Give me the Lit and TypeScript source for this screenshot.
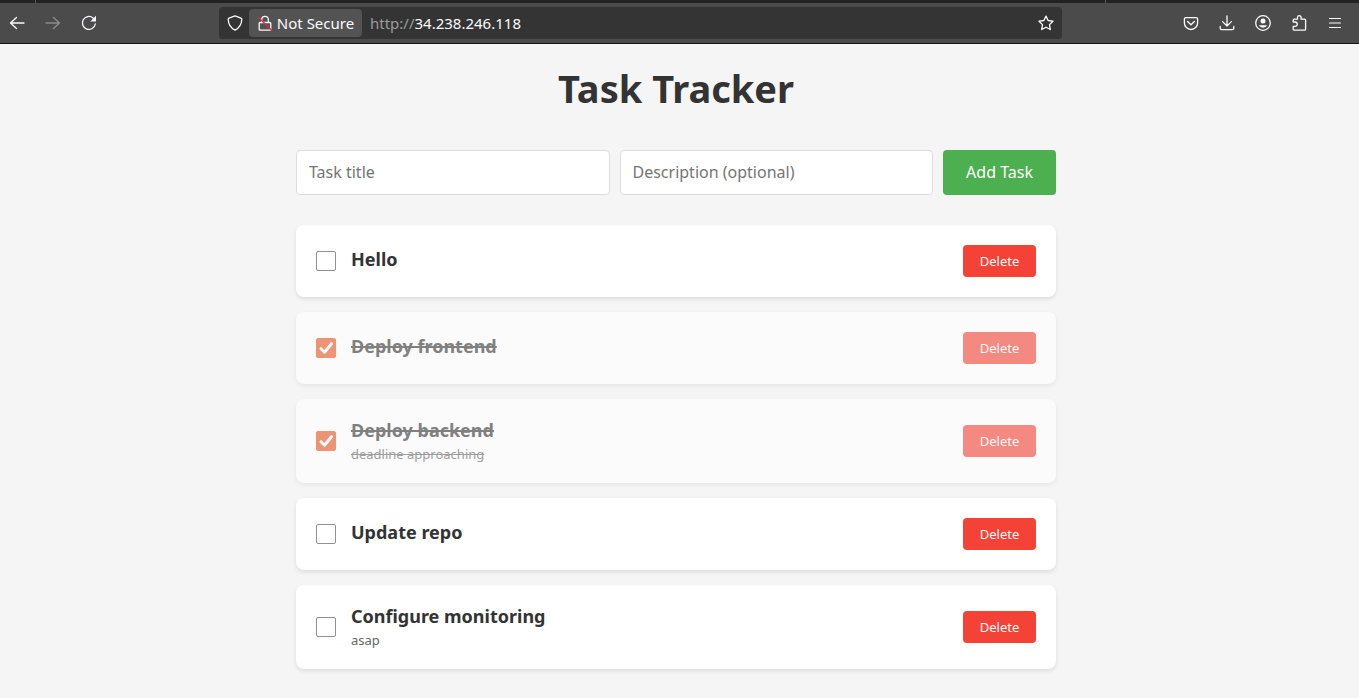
import { LitElement, html, css, svg, nothing } from "lit";
import { customElement, property, state } from "lit/decorators.js";
import { classMap } from "lit/directives/class-map.js";

interface Task {
  id: number;
  title: string;
  description: string;
  done: boolean;
}

const icons = {
  back: svg`<path d="M15 8H1.500M7.500 2.500L1.500 8l6 5.500" />`,
  forward: svg`<path d="M1 8h13.500M8.500 2.500l6 5.500-6 5.500" />`,
  reload: svg`<path d="M14.300 9A6.500 6.500 0 1 1 12 2.900l1.500 1.300" /><path class="solid" d="M15 .8v5.700H9.300z" />`,
  shield: svg`<path d="M8 .9l6 2.300c.5.200.8.600.8 1.100C14.600 9.200 12.400 13 8 15.200 3.600 13 1.400 9.200 1.200 4.300c0-.5.300-.9.800-1.100z" />`,
  lock: svg`<path d="M4.700 7V4.600a3.300 3.300 0 0 1 6.600 0V7M3.200 7.500h9.600c.6 0 1 .4 1 1v5.700c0 .6-.4 1-1 1H3.200c-.6 0-1-.4-1-1V8.500c0-.6.4-1 1-1z" /><path class="strike" d="M1.200 2.200l13.500 13" />`,
  star: svg`<path d="M8 1.100l2.100 4.400 4.900.7-3.500 3.400.8 4.900L8 12.200l-4.300 2.300.8-4.900L1 6.200l4.900-.7z" />`,
  pocket: svg`<path d="M2.800 2.600h10.400c.8 0 1.400.6 1.400 1.400V7.900a6.600 6.600 0 0 1-13.200 0V4c0-.8.600-1.400 1.400-1.400z" /><path d="M4.600 6.500L8 9.700l3.400-3.200" />`,
  download: svg`<path d="M8 .8v10M3.600 6.600L8 11l4.400-4.400M1.200 11.500v1.800c0 .8.600 1.400 1.400 1.400h10.800c.8 0 1.400-.6 1.400-1.400v-1.800" />`,
  account: svg`<circle cx="8" cy="8" r="7.300" /><circle class="solid" cx="8" cy="6" r="2.500" /><path class="solid" d="M3.800 10.300h8.400A5 5 0 0 1 8 12.800a5 5 0 0 1-4.200-2.500z" />`,
  extension: svg`<path d="M2.200 7V5.200c0-.6.400-1 1-1h3.300V2.500a1.800 1.800 0 0 1 3.600 0v1.700h3.500c.6 0 1 .4 1 1v9c0 .6-.4 1-1 1H3.200c-.6 0-1-.4-1-1v-2.900h1.900a2.150 2.150 0 0 0 0-4.300z" />`,
  menu: svg`<path class="thin" d="M2.500 3.500h11M2.500 8h11M2.500 12.500h11" />`,
};

type IconName = keyof typeof icons;

@customElement("tool-icon")
class ToolIcon extends LitElement {
  @property() name: IconName = "menu";

  static styles = css`
    :host {
      display: block;
      width: 16px;
      height: 16px;
    }
    svg {
      display: block;
      overflow: visible;
      fill: none;
      stroke: currentColor;
      stroke-width: 1.3;
      stroke-linecap: round;
      stroke-linejoin: round;
    }
    .solid {
      fill: currentColor;
      stroke: none;
    }
    .thin {
      stroke-width: 1.1;
    }
    .strike {
      stroke: #e22850;
    }
  `;

  render() {
    return html`<svg width="16" height="16" viewBox="0 0 16 16" aria-hidden="true">
      ${icons[this.name]}
    </svg>`;
  }
}

@customElement("browser-bar")
class BrowserBar extends LitElement {
  static styles = css`
    :host {
      display: block;
      color: #fbfbfe;
      font-size: 15px;
      line-height: 20px;
    }
    .tabs {
      display: flex;
      justify-content: space-between;
      height: 3px;
      padding: 0 253px 0 35px;
      background: #222222;
    }
    .divider {
      width: 1px;
      background: #5a5a5a;
    }
    .toolbar {
      display: grid;
      grid-template-columns: 219px minmax(0, 843px) 1fr;
      align-items: center;
      height: 40px;
      background: #4b4b4b;
      border-bottom: 1px solid #141414;
    }
    .group {
      display: flex;
      gap: 4px;
    }
    .group.end {
      justify-content: flex-end;
      padding-right: 8px;
    }
    .group.start {
      padding-left: 1px;
    }
    button {
      display: flex;
      align-items: center;
      justify-content: center;
      box-sizing: border-box;
      width: 32px;
      height: 32px;
      padding: 0;
      border: 0;
      border-radius: 4px;
      background: none;
      color: inherit;
      font: inherit;
    }
    button:disabled {
      color: #8c8c8c;
    }
    .address {
      display: flex;
      align-items: center;
      box-sizing: border-box;
      height: 32px;
      border-radius: 4px;
      background: #343434;
    }
    .address .shield {
      width: 30px;
      padding-left: 2px;
    }
    .address .insecure {
      flex: none;
      width: 113px;
      height: 28px;
      gap: 4px;
      background: #535353;
    }
    .url {
      display: flex;
      flex: 1;
      min-width: 0;
      padding-left: 8px;
    }
    .scheme {
      color: #9b9b9b;
    }
    input {
      flex: 1;
      min-width: 0;
      padding: 0;
      border: 0;
      outline: 0;
      background: none;
      color: inherit;
      font: inherit;
    }
  `;

  render() {
    return html`
      <div class="tabs"><span class="divider"></span><span class="divider"></span></div>
      <div class="toolbar">
        <div class="group start">
          <button aria-label="Back"><tool-icon name="back"></tool-icon></button>
          <button aria-label="Forward" disabled><tool-icon name="forward"></tool-icon></button>
          <button aria-label="Reload"><tool-icon name="reload"></tool-icon></button>
        </div>
        <div class="address">
          <button class="shield" aria-label="Tracking protection">
            <tool-icon name="shield"></tool-icon>
          </button>
          <button class="insecure"><tool-icon name="lock"></tool-icon>Not Secure</button>
          <label class="url">
            <span class="scheme">http://</span>
            <input type="text" aria-label="Address" .value=${"34.238.246.118"} />
          </label>
          <button aria-label="Bookmark"><tool-icon name="star"></tool-icon></button>
        </div>
        <div class="group end">
          <button aria-label="Save to Pocket"><tool-icon name="pocket"></tool-icon></button>
          <button aria-label="Downloads"><tool-icon name="download"></tool-icon></button>
          <button aria-label="Account"><tool-icon name="account"></tool-icon></button>
          <button aria-label="Extensions"><tool-icon name="extension"></tool-icon></button>
          <button aria-label="Menu"><tool-icon name="menu"></tool-icon></button>
        </div>
      </div>
    `;
  }
}

@customElement("task-card")
class TaskCard extends LitElement {
  @property({ attribute: false }) task!: Task;

  static styles = css`
    :host {
      display: block;
    }
    .card {
      display: flex;
      align-items: center;
      gap: 15px;
      padding: 20px;
      border-radius: 8px;
      background: #ffffff;
      box-shadow: 0 2px 4px rgba(0, 0, 0, 0.1);
    }
    .card.done {
      opacity: 0.6;
    }
    .tick {
      display: grid;
      flex: none;
    }
    .tick > * {
      grid-area: 1 / 1;
    }
    .tick input {
      appearance: none;
      box-sizing: border-box;
      width: 20px;
      height: 20px;
      margin: 0;
      border: 1px solid #8f8f9d;
      border-radius: 2px;
      background: #ffffff;
    }
    .tick input:checked {
      border-color: #e95420;
      background: #e95420;
    }
    .tick svg {
      pointer-events: none;
      fill: none;
      stroke: #ffffff;
      stroke-width: 3;
      stroke-linecap: round;
      stroke-linejoin: round;
    }
    .info {
      flex: 1;
      min-width: 0;
    }
    .title {
      display: block;
      margin: 0 0 5px;
      color: #333333;
      font-size: 18px;
      font-weight: 700;
      line-height: 22px;
    }
    .description {
      margin: 0;
      color: #666666;
      font-size: 13px;
      line-height: 17px;
    }
    .done .title,
    .done .description {
      text-decoration: line-through;
    }
    .done .title {
      text-decoration-thickness: 2px;
    }
    .delete {
      flex: none;
      width: 73px;
      height: 32px;
      padding: 0;
      border: 0;
      border-radius: 4px;
      background: #f44336;
      color: #ffffff;
      font: inherit;
      font-size: 13px;
    }
  `;

  private emit(name: string) {
    this.dispatchEvent(new CustomEvent(name, { detail: this.task.id }));
  }

  render() {
    const { title, description, done } = this.task;
    return html`
      <div class=${classMap({ card: true, done })}>
        <span class="tick">
          <input id="done" type="checkbox" .checked=${done} @change=${() => this.emit("toggle-task")} />
          ${done
            ? html`<svg width="20" height="20" viewBox="0 0 20 20" aria-hidden="true">
                <path d="M5 10.700l3.500 3.500L15.500 5.700" />
              </svg>`
            : nothing}
        </span>
        <div class="info">
          <label class="title" for="done">${title}</label>
          ${description ? html`<p class="description">${description}</p>` : nothing}
        </div>
        <button class="delete" @click=${() => this.emit("delete-task")}>Delete</button>
      </div>
    `;
  }
}

@customElement("app-root")
class AppRoot extends LitElement {
  @state() private tasks: Task[] = [
    { id: 1, title: "Hello", description: "", done: false },
    { id: 2, title: "Deploy frontend", description: "", done: true },
    { id: 3, title: "Deploy backend", description: "deadline approaching", done: true },
    { id: 4, title: "Update repo", description: "", done: false },
    { id: 5, title: "Configure monitoring", description: "asap", done: false },
  ];

  static styles = css`
    :host {
      display: block;
      min-height: 100vh;
      background: #f5f5f5;
      color: #333333;
      font-family: "Noto Sans", "Open Sans", sans-serif;
    }
    main {
      max-width: 760px;
      margin: 0 auto;
      padding: 20px;
    }
    .page {
      padding-right: 7px;
    }
    h1 {
      margin: 0 0 38px;
      font-size: 38px;
      font-weight: 700;
      line-height: 48px;
      text-align: center;
    }
    form {
      display: flex;
      gap: 10px;
      margin-bottom: 30px;
    }
    input {
      box-sizing: border-box;
      flex: 1;
      min-width: 0;
      height: 45px;
      padding: 0 12px 2px;
      border: 1px solid #dddddd;
      border-radius: 4px;
      background: #ffffff;
      color: inherit;
      font: inherit;
      font-size: 16px;
    }
    input::placeholder {
      color: #757575;
      opacity: 1;
    }
    .add {
      width: 113px;
      padding: 0 0 2px;
      border: 0;
      border-radius: 4px;
      background: #4caf50;
      color: #ffffff;
      font: inherit;
      font-size: 16px;
    }
    .list {
      display: grid;
      gap: 15px;
    }
  `;

  private add(event: SubmitEvent) {
    event.preventDefault();
    const form = event.target as HTMLFormElement;
    const data = new FormData(form);
    const title = String(data.get("title")).trim();
    if (!title) return;
    const description = String(data.get("description")).trim();
    this.tasks = [{ id: Date.now(), title, description, done: false }, ...this.tasks];
    form.reset();
  }

  private toggle(event: CustomEvent<number>) {
    this.tasks = this.tasks.map((t) => (t.id === event.detail ? { ...t, done: !t.done } : t));
  }

  private remove(event: CustomEvent<number>) {
    this.tasks = this.tasks.filter((t) => t.id !== event.detail);
  }

  render() {
    return html`
      <browser-bar></browser-bar>
      <div class="page">
        <main>
          <h1>Task Tracker</h1>
          <form @submit=${this.add}>
            <input type="text" name="title" placeholder="Task title" aria-label="Task title" />
            <input
              type="text"
              name="description"
              placeholder="Description (optional)"
              aria-label="Description (optional)"
            />
            <button class="add" type="submit">Add Task</button>
          </form>
          <div class="list">
            ${this.tasks.map(
              (task) => html`<task-card
                .task=${task}
                @toggle-task=${this.toggle}
                @delete-task=${this.remove}
              ></task-card>`
            )}
          </div>
        </main>
      </div>
    `;
  }
}
